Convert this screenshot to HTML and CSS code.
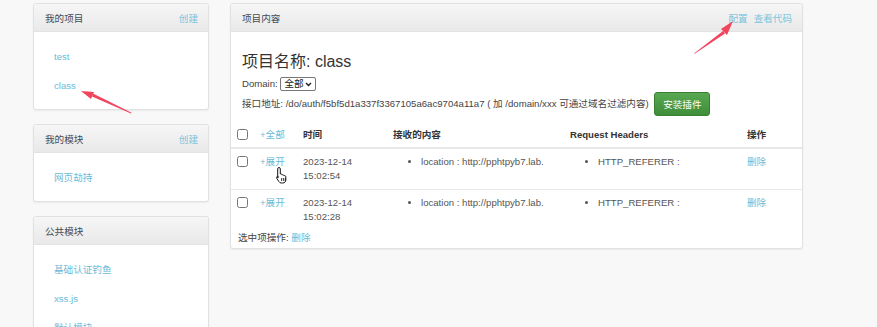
FILE: index.html
```html
<!DOCTYPE html>
<html>
<head>
    <meta charset="utf-8">
    <link rel="stylesheet" href="styles.css">
</head>
<body>
    <div class="page">
        <!-- left column -->
        <div class="sidebar">
            <div class="panel">
                <div class="panel-head">我的项目 <a class="head-link" href="#">创建</a></div>
                <ul class="side-list">
                    <li><a href="#">test</a></li>
                    <li><a href="#">class</a></li>
                </ul>
            </div>
            <div class="panel">
                <div class="panel-head">我的模块 <a class="head-link" href="#">创建</a></div>
                <ul class="side-list">
                    <li><a href="#">网页劫持</a></li>
                </ul>
            </div>
            <div class="panel">
                <div class="panel-head">公共模块</div>
                <ul class="side-list">
                    <li><a href="#">基础认证钓鱼</a></li>
                    <li><a href="#">xss.js</a></li>
                    <li><a href="#">默认模块</a></li>
                </ul>
            </div>
        </div>

        <!-- project content -->
        <div class="panel main">
            <div class="panel-head">项目内容
                <span class="head-links"><a href="#">配置</a><a href="#">查看代码</a></span>
            </div>
            <div class="proj-info">
                <h3 class="proj-title">项目名称: class</h3>
                <div class="domain-row">Domain:
                    <span class="domain-select">全部
                        <svg width="7" height="5" viewBox="0 0 7 5"><path d="M1 1l2.5 2.5L6 1" fill="none" stroke="#222" stroke-width="1.4"/></svg>
                    </span>
                </div>
                <div class="api-row">接口地址: /do/auth/f5bf5d1a337f3367105a6ac9704a11a7 ( 加 /domain/xxx 可通过域名过滤内容)
                    <button class="btn-green">安装插件</button>
                </div>
            </div>

            <table class="records">
                <colgroup>
                    <col style="width:23px"><col style="width:43px"><col style="width:90px">
                    <col style="width:177px"><col style="width:177px"><col>
                </colgroup>
                <thead>
                    <tr>
                        <th><input type="checkbox" class="chk"></th>
                        <th><a href="#" class="normal">+全部</a></th>
                        <th>时间</th>
                        <th>接收的内容</th>
                        <th>Request Headers</th>
                        <th>操作</th>
                    </tr>
                </thead>
                <tbody>
                    <tr>
                        <td><input type="checkbox" class="chk"></td>
                        <td><a href="#">+展开</a></td>
                        <td>2023-12-14<br>15:02:54</td>
                        <td><ul class="vals"><li>location : http://pphtpyb7.lab.</li></ul></td>
                        <td><ul class="vals"><li>HTTP_REFERER :</li></ul></td>
                        <td><a href="#">删除</a></td>
                    </tr>
                    <tr>
                        <td><input type="checkbox" class="chk"></td>
                        <td><a href="#">+展开</a></td>
                        <td>2023-12-14<br>15:02:28</td>
                        <td><ul class="vals"><li>location : http://pphtpyb7.lab.</li></ul></td>
                        <td><ul class="vals"><li>HTTP_REFERER :</li></ul></td>
                        <td><a href="#">删除</a></td>
                    </tr>
                </tbody>
            </table>
            <div class="bulk">选中项操作: <a href="#">删除</a></div>
        </div>
    </div>

    <!-- annotation arrows drawn on top of the page -->
    <svg class="marks" width="877" height="327" viewBox="0 0 877 327">
        <polygon points="131,113.6 92,96.6 93,93.6 131.6,112.8" fill="#f2445c"/>
        <polygon points="81,91 94,92 91,99" fill="#f2445c"/>
        <polygon points="694,53.4 723,31 725,33.5 694.6,53.8" fill="#f2445c"/>
        <polygon points="733,21 721,29 727,35" fill="#f2445c"/>
    </svg>

    <!-- mouse pointer -->
    <svg class="cursor" width="14" height="18" viewBox="0 0 14 18">
        <path d="M4 1.5c.8 0 1.3.6 1.3 1.3v5.2l.4-.1c.7-.1 1.3.3 1.4 1l.5-.1c.7-.1 1.3.3 1.4.9l.4-.1c.8-.1 1.4.4 1.4 1.1v3.3c0 1.8-1.3 3-3.1 3H6.3c-1.1 0-1.8-.5-2.4-1.4L1.7 12.2c-.4-.6-.2-1.3.4-1.6.5-.3 1.1-.2 1.5.3l-.9.9V2.8c0-.7.5-1.3 1.3-1.3z" fill="#fff" stroke="#111" stroke-width="1" stroke-linejoin="round"/>
        <path d="M6.6 12v3M8.4 12v3M10.2 12v3" stroke="#111" stroke-width=".8"/>
    </svg>
</body>
</html>
```
FILE: styles.css
```css
/* base */
body {
    margin: 0;
    background-color: #f8f8f8;
    font-family: "Liberation Sans", Arial, "Noto Sans CJK SC", sans-serif;
    font-size: 9.6px;
    color: #555;
}

a {
    color: #6bbbd8;
    text-decoration: none;
}

.page {
    display: flex;
    align-items: flex-start;
    gap: 21px;
    padding: 3px 0 0 33px;
}

/* panels */
.panel {
    background-color: #fff;
    border: 1px solid #e1e1e1;
    border-radius: 3px;
    box-shadow: 0 1px 2px rgba(0, 0, 0, 0.06);
}

.panel-head {
    display: flex;
    align-items: center;
    justify-content: space-between;
    height: 28px;
    box-sizing: border-box;
    padding: 0 10px 0 11px;
    background: linear-gradient(#f6f6f6, #e9e9e9);
    border-bottom: 1px solid #e3e3e3;
    border-radius: 3px 3px 0 0;
    color: #454a55;
}

.head-link {
    color: #7cc4dc;
}

.head-links a {
    margin-left: 6px;
    color: #7cc4dc;
}

/* sidebar */
.sidebar {
    width: 176px;
    display: flex;
    flex-direction: column;
    gap: 14px;
}

.side-list {
    list-style: none;
    margin: 0;
    padding: 10px 0 9px 20px;
}

.side-list li {
    line-height: 29px;
}

/* main panel */
.main {
    width: 571px;
}

.proj-info {
    padding: 0 11px;
}

.proj-title {
    margin: 20px 0 4px;
    font-size: 16px;
    line-height: 20px;
    font-weight: normal;
    color: #333;
}

.domain-row {
    line-height: 16px;
    color: #444;
}

.domain-select {
    display: inline-flex;
    align-items: center;
    justify-content: space-between;
    width: 36px;
    height: 14px;
    box-sizing: border-box;
    padding: 0 3px 0 3px;
    vertical-align: middle;
    border: 1px solid #777;
    border-radius: 2px;
    background: #fff;
    color: #222;
    font-size: 9.6px;
}

.api-row {
    line-height: 24px;
    color: #444;
}

.btn-green {
    width: 56px;
    height: 24px;
    margin-left: 3px;
    padding: 0;
    vertical-align: middle;
    font-family: inherit;
    font-size: 9.6px;
    color: #fff;
    background: linear-gradient(#58a852, #3f8d39);
    border: 1px solid #3a8034;
    border-radius: 3px;
}

/* records table */
.records {
    width: 100%;
    margin-top: 7px;
    border-collapse: collapse;
    table-layout: fixed;
}

.records th {
    padding: 5px 6px;
    line-height: 14px;
    text-align: left;
    color: #333;
    border-bottom: 2px solid #e8e8e8;
}

.records td {
    padding: 6px 6px;
    line-height: 14px;
    vertical-align: top;
    border-bottom: 1px solid #e8e8e8;
}

.records tbody tr:last-child td {
    border-bottom: none;
}

.records th a.normal {
    font-weight: normal;
}

.chk {
    width: 11px;
    height: 11px;
    margin: 1px 0 0;
    vertical-align: top;
}

.vals {
    margin: 0;
    padding-left: 28px;
}

.bulk {
    padding: 0 7px 2px;
    line-height: 16px;
    color: #444;
}

/* overlays */
.marks {
    position: absolute;
    left: 0;
    top: 0;
    pointer-events: none;
}

.cursor {
    position: absolute;
    left: 275px;
    top: 166px;
    pointer-events: none;
}
```
